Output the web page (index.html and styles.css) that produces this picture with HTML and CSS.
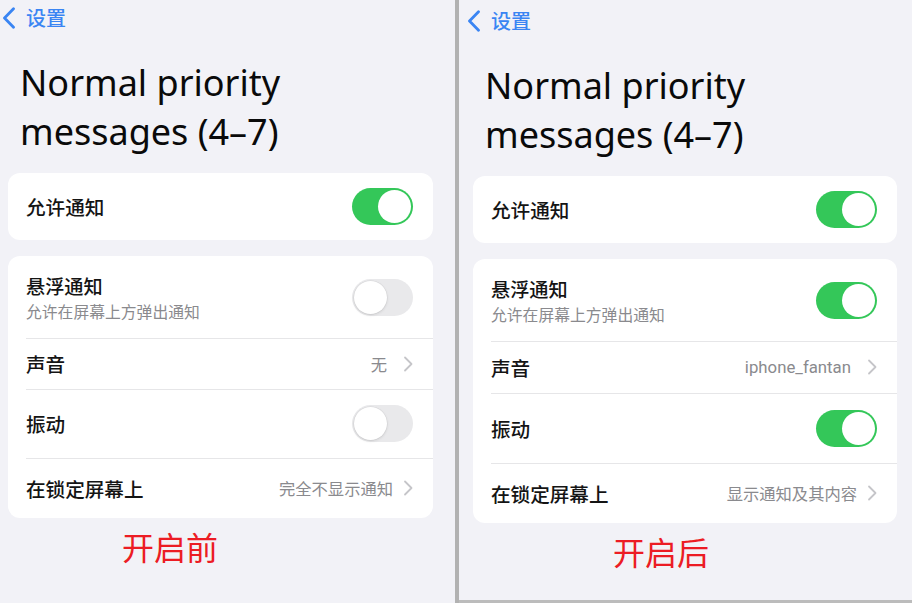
FILE: index.html
```html
<!DOCTYPE html>
<html lang="zh-CN">
<head>
<meta charset="utf-8">
<title>Normal priority messages</title>
<link rel="stylesheet" href="styles.css">
</head>
<body>
<div class="screen">
  <section class="panel panel--before">
    <nav class="nav">
      <svg class="back-icon" viewBox="0 0 16 22" width="16" height="22"><path d="M12.5 1.8 L3.5 11 L12.5 20.2" fill="none" stroke="currentColor" stroke-width="2.8" stroke-linecap="round" stroke-linejoin="round"/></svg>
      <span class="nav-title">设置</span>
    </nav>
    <h1 class="title">Normal priority<br>messages (4–7)</h1>
    <div class="card">
      <div class="row row--allow"><span class="row-label">允许通知</span><span class="switch switch--on"></span></div>
    </div>
    <div class="card card--list">
      <div class="row row--float">
        <div class="row-text"><span class="row-label">悬浮通知</span><span class="row-sub">允许在屏幕上方弹出通知</span></div>
        <span class="switch"></span>
      </div>
      <div class="row row--sound"><span class="row-label">声音</span><span class="row-value"><span class="value-text">无</span><svg class="chev" viewBox="0 0 10 16" width="10" height="16"><path d="M2 1.5 L8.5 8 L2 14.5" fill="none" stroke="currentColor" stroke-width="1.8" stroke-linecap="round" stroke-linejoin="round"/></svg></span></div>
      <div class="row row--vibrate"><span class="row-label">振动</span><span class="switch"></span></div>
      <div class="row row--lock"><span class="row-label">在锁定屏幕上</span><span class="row-value"><span class="value-text">完全不显示通知</span><svg class="chev" viewBox="0 0 10 16" width="10" height="16"><path d="M2 1.5 L8.5 8 L2 14.5" fill="none" stroke="currentColor" stroke-width="1.8" stroke-linecap="round" stroke-linejoin="round"/></svg></span></div>
    </div>
    <p class="caption">开启前</p>
  </section>
  <div class="divider"></div>
  <section class="panel panel--after">
    <nav class="nav">
      <svg class="back-icon" viewBox="0 0 16 22" width="16" height="22"><path d="M12.5 1.8 L3.5 11 L12.5 20.2" fill="none" stroke="currentColor" stroke-width="2.8" stroke-linecap="round" stroke-linejoin="round"/></svg>
      <span class="nav-title">设置</span>
    </nav>
    <h1 class="title">Normal priority<br>messages (4–7)</h1>
    <div class="card">
      <div class="row row--allow"><span class="row-label">允许通知</span><span class="switch switch--on"></span></div>
    </div>
    <div class="card card--list">
      <div class="row row--float">
        <div class="row-text"><span class="row-label">悬浮通知</span><span class="row-sub">允许在屏幕上方弹出通知</span></div>
        <span class="switch switch--on"></span>
      </div>
      <div class="row row--sound"><span class="row-label">声音</span><span class="row-value"><span class="value-text">iphone_fantan</span><svg class="chev" viewBox="0 0 10 16" width="10" height="16"><path d="M2 1.5 L8.5 8 L2 14.5" fill="none" stroke="currentColor" stroke-width="1.8" stroke-linecap="round" stroke-linejoin="round"/></svg></span></div>
      <div class="row row--vibrate"><span class="row-label">振动</span><span class="switch switch--on"></span></div>
      <div class="row row--lock"><span class="row-label">在锁定屏幕上</span><span class="row-value"><span class="value-text">显示通知及其内容</span><svg class="chev" viewBox="0 0 10 16" width="10" height="16"><path d="M2 1.5 L8.5 8 L2 14.5" fill="none" stroke="currentColor" stroke-width="1.8" stroke-linecap="round" stroke-linejoin="round"/></svg></span></div>
    </div>
    <p class="caption">开启后</p>
  </section>
</div>
</body>
</html>
```

FILE: styles.css
```css
* { box-sizing: border-box; }

html, body {
  margin: 0;
  padding: 0;
}

body {
  width: 912px;
  height: 603px;
  overflow: hidden;
  background: #bcbcbc;
  font-family: Roboto, "Noto Sans CJK SC", sans-serif;
  color: #111;
}

.screen {
  display: flex;
  align-items: flex-start;
  width: 912px;
  height: 603px;
}

.panel {
  background: #f2f2f7;
  display: flex;
  flex-direction: column;
}

.panel--before {
  width: 455px;
  height: 603px;
  padding: 0 22px 0 8px;
}

.panel--after {
  width: 453px;
  height: 600px;
  padding: 3px 15px 0 14px;
}

.divider {
  width: 4px;
  height: 603px;
  background: #b2b2b2;
}

.nav {
  height: 36px;
  display: flex;
  align-items: center;
  margin-left: -7px;
  color: #3a85f3;
}

.back-icon {
  display: block;
  flex: none;
}

.nav-title {
  margin-left: 9px;
  font-family: "Noto Sans CJK SC", sans-serif;
  font-size: 20px;
  font-weight: 500;
  line-height: 24px;
}

.title {
  margin: 22px 0 17px 12px;
  font-family: "Noto Sans", "Noto Sans CJK SC", sans-serif;
  font-weight: 400;
  font-size: 36px;
  line-height: 49px;
  color: #0a0a0a;
}

.card {
  background: #ffffff;
  border-radius: 12px;
  overflow: hidden;
}

.card--list {
  margin-top: 16px;
}

.row {
  display: flex;
  align-items: center;
  justify-content: space-between;
  padding: 0 20px 0 18px;
  position: relative;
}

.row + .row::before {
  content: "";
  position: absolute;
  left: 18px;
  right: 0;
  top: 0;
  height: 1px;
  background: #e6e6e8;
}

.row--allow { height: 67px; }
.row--float { height: 82px; }
.row--sound { height: 51px; }
.row--vibrate { height: 69px; }
.row--lock { height: 60px; }

.panel--after .row--sound { height: 52px; }
.panel--after .row--vibrate { height: 70px; }

.row-text {
  display: flex;
  flex-direction: column;
}

.row-label {
  font-family: "Noto Sans CJK SC", sans-serif;
  font-size: 19.6px;
  font-weight: 500;
  line-height: 25px;
  color: #141414;
}

.row-text .row-label {
  font-size: 19.2px;
  line-height: 28px;
}

.row-sub {
  font-family: "Noto Sans CJK SC", sans-serif;
  font-size: 15.8px;
  line-height: 23px;
  color: #8a8a8e;
}

.row-value {
  display: flex;
  align-items: center;
  gap: 10px;
  font-family: Roboto, "Noto Sans CJK SC", sans-serif;
  font-size: 16.3px;
  color: #8a8a8e;
}

.row--sound .value-text {
  margin-right: 6px;
}

.panel--after .row--sound .value-text {
  font-size: 16.8px;
}

.chev {
  display: block;
  color: #c5c5c9;
}

.switch {
  flex: none;
  width: 61px;
  height: 37px;
  border-radius: 19px;
  background: #e9e9eb;
  position: relative;
}

.switch::after {
  content: "";
  position: absolute;
  top: 2px;
  left: 2px;
  width: 33px;
  height: 33px;
  border-radius: 50%;
  background: #ffffff;
  box-shadow: 0 0 0 0.5px rgba(0, 0, 0, 0.06), 0 1px 3px rgba(0, 0, 0, 0.12);
}

.switch--on {
  background: #34c759;
}

.switch--on::after {
  left: 26px;
  box-shadow: none;
}

.caption {
  margin: 11px 0 0;
  font-family: "Noto Sans CJK SC", sans-serif;
  font-size: 32px;
  line-height: 34px;
  font-weight: 400;
  color: #ec1c24;
}

.panel--before .caption { padding-left: 114px; }
.panel--after .caption { padding-left: 140px; }
```
